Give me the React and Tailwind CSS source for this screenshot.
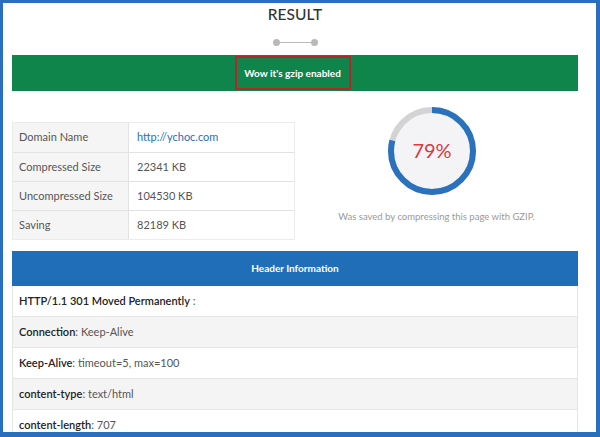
import React from "react";

const info = [
  ["Domain Name", "http://ychoc.com", true],
  ["Compressed Size", "22341 KB"],
  ["Uncompressed Size", "104530 KB"],
  ["Saving", "82189 KB"],
];

const headers = [
  ["HTTP/1.1 301 Moved Permanently", " :", ""],
  ["Connection", ": ", "Keep-Alive"],
  ["Keep-Alive", ": ", "timeout=5, max=100"],
  ["content-type", ": ", "text/html"],
  ["content-length", ": ", "707"],
];

function Ring() {
  const r = 41;
  const c = 2 * Math.PI * r;
  const pct = 0.79;
  return (
    <svg width="90" height="90" viewBox="0 0 90 90">
      <circle cx="45" cy="45" r="41" fill="#f4f4f6" />
      <circle cx="45" cy="45" r={r} fill="none" stroke="#d3d3d3" strokeWidth="6" />
      <circle
        cx="45"
        cy="45"
        r={r}
        fill="none"
        stroke="#2a72bd"
        strokeWidth="6"
        strokeDasharray={`${c * pct} ${c}`}
        transform="rotate(-90 45 45)"
      />
      <text x="45" y="52" textAnchor="middle" fontSize="20" fill="#d9383f" fontFamily="Lato, sans-serif">
        79%
      </text>
    </svg>
  );
}

export default function App() {
  return (
    <div
      className="h-[437px] w-[600px] overflow-hidden bg-white border-[#2a6fbe] border-l-[3px] border-t-[3px] border-r-4 border-b-[5px] pl-[9px] pr-[18px]"
      style={{ fontFamily: "Lato, 'Open Sans', sans-serif" }}
    >
      <div className="flex flex-col items-center">
        <div className="mt-[1px] text-[15.5px] leading-[20px] font-medium text-[#333]">RESULT</div>
        <div className="mt-[15px] flex items-center">
          <div className="h-[7px] w-[7px] rounded-full bg-[#b9b9b9]" />
          <div className="h-[1px] w-[31px] bg-[#b9b9b9]" />
          <div className="h-[7px] w-[7px] rounded-full bg-[#b9b9b9]" />
        </div>
      </div>
      <div className="mt-[9px] h-[36px] bg-[#0f844b] flex justify-center">
        <div className="ml-[-5px] mt-[1px] h-[34px] w-[116px] border-2 border-[#b3272b] flex items-center justify-center text-white font-bold text-[10px]">
          Wow it&apos;s gzip enabled
        </div>
      </div>
      <div className="grid grid-cols-2">
        <div className="mt-[31px] border border-[#ececec] text-[11px] text-[#555]">
          {info.map(([k, v, link], i) => (
            <div key={k} className={`flex h-[29px] ${i > 0 ? "border-t border-[#e2e2e2]" : ""}`}>
              <div className="w-[116px] bg-[#f5f5f5] border-r border-[#e2e2e2] flex items-center pl-[6px]">{k}</div>
              <div className={`flex items-center pl-[8px] ${link ? "text-[#2a6ebb]" : ""}`}>{v}</div>
            </div>
          ))}
        </div>
        <div className="flex flex-col items-center pt-[15px]">
          <div className="ml-[-9px]"><Ring /></div>
          <div className="mt-[14px] text-[9.5px] text-[#9a9a9a]">Was saved by compressing this page with GZIP.</div>
        </div>
      </div>
      <div className="mt-[11px] h-[35px] bg-[#1f6eb7] flex items-center justify-center text-white font-bold text-[10px]">
        Header Information
      </div>
      <div className="border-x border-[#e6e6e6] text-[11px]">
        {headers.map(([k, sep, v], i) => (
          <div
            key={k}
            className={`h-[31px] flex items-center pl-[6px] border-b border-[#e6e6e6] ${i % 2 ? "bg-[#f4f4f4]" : "bg-white"}`}
          >
            <div className="whitespace-pre">
              <span className="font-semibold text-[#222]">{k}</span>
              <span className="text-[#555]">{sep}{v}</span>
            </div>
          </div>
        ))}
      </div>
    </div>
  );
}
